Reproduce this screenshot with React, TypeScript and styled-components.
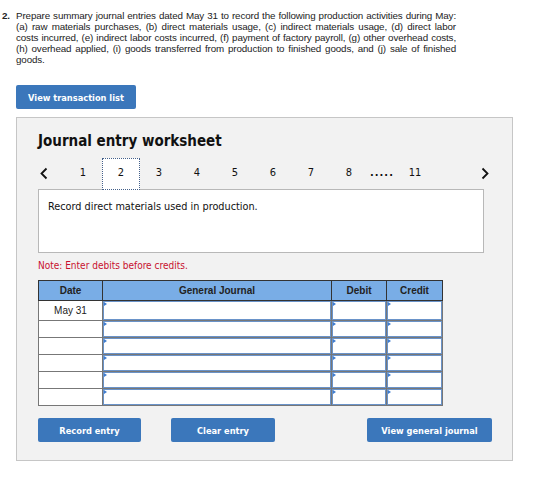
import React from "react";
import styled, { createGlobalStyle } from "styled-components";

const Global = createGlobalStyle`
  html, body { margin: 0; padding: 0; background: #ffffff; }
  body { font-family: "Liberation Sans", Arial, sans-serif; color: #222; }
`;

const UI = `"DejaVu Sans Condensed", "DejaVu Sans", Verdana, sans-serif`;

const Page = styled.div`
  width: 535px;
  padding: 10px 0 0 0;
  box-sizing: border-box;
`;

const Question = styled.div`
  display: flex;
  font-size: 9.8px;
  line-height: 11px;
  letter-spacing: -0.12px;
  color: #222;
`;

const QNum = styled.div`
  width: 16px;
  padding-left: 2px;
  box-sizing: border-box;
  font-weight: bold;
  flex: none;
`;

const QText = styled.p`
  margin: 0;
  width: 440px;
  text-align: justify;
`;

const BlueButton = styled.button<{ $w: number }>`
  width: ${(p) => p.$w}px;
  height: 24px;
  background: #3b77bb;
  color: #ffffff;
  border: none;
  border-radius: 2px;
  font-family: ${UI};
  font-weight: bold;
  font-size: 9.2px;
  padding: 0;
  cursor: pointer;
`;

const TopButtonRow = styled.div`
  padding: 20px 0 0 16px;
`;

const Panel = styled.section`
  margin: 8px 0 0 16px;
  width: 497px;
  height: 344px;
  box-sizing: border-box;
  background: #f2f2f2;
  border: 1px solid #c6c6c6;
  padding: 14px 20px 0 21px;
  font-family: ${UI};
`;

const Title = styled.h2`
  margin: 0;
  font-size: 15px;
  line-height: 18px;
  font-weight: bold;
  color: #111;
`;

const NavRow = styled.div`
  display: flex;
  align-items: center;
  width: 451px;
  height: 32px;
  margin-top: 8px;
  margin-bottom: -1px;
  position: relative;
  z-index: 1;
`;

const Arrow = styled.div<{ $right?: boolean }>`
  width: 26px;
  display: flex;
  justify-content: ${(p) => (p.$right ? "flex-end" : "flex-start")};
  margin-left: ${(p) => (p.$right ? "auto" : "0")};
  padding-left: ${(p) => (p.$right ? "0" : "2px")};
  box-sizing: border-box;
  margin-top: -2px;
`;

const Tab = styled.div<{ $active?: boolean }>`
  width: 38px;
  height: 32px;
  box-sizing: border-box;
  display: flex;
  align-items: center;
  justify-content: center;
  padding-bottom: 3px;
  font-size: 11px;
  color: #111;
  background: ${(p) => (p.$active ? "#ffffff" : "transparent")};
  border: ${(p) => (p.$active ? "1px dotted #44608a" : "1px solid transparent")};
`;

const Dots = styled.div`
  width: 28px;
  text-align: center;
  font-size: 11px;
  font-weight: bold;
  letter-spacing: 1px;
  color: #111;
  padding-bottom: 3px;
`;

const DescBox = styled.div`
  width: 446px;
  height: 64px;
  box-sizing: border-box;
  background: #ffffff;
  border: 1px solid #b8b8b8;
  padding: 10px 9px;
  font-size: 10.8px;
  line-height: 14px;
  color: #111;
`;

const Note = styled.div`
  margin-top: 6px;
  font-size: 10px;
  line-height: 14px;
  color: #c8102e;
`;

const Table = styled.table`
  margin-top: 7px;
  width: 404px;
  border-collapse: collapse;
  table-layout: fixed;
  font-family: "Liberation Sans", Arial, sans-serif;
  font-size: 10px;
`;

const Th = styled.th<{ $w: number }>`
  width: ${(p) => p.$w}px;
  height: 20px;
  padding: 0;
  background: #79ade6;
  border: 1px solid #333;
  font-weight: bold;
  color: #222;
  box-sizing: border-box;
`;

const Td = styled.td<{ $h: number }>`
  height: ${(p) => p.$h}px;
  padding: 0;
  border: 1px solid #777;
  background: #ffffff;
  text-align: center;
  color: #222;
  box-sizing: border-box;
`;

const Field = styled.div<{ $h: number }>`
  height: ${(p) => p.$h}px;
  box-sizing: border-box;
  border: 1px solid #6a93c9;
  position: relative;
  background: #fff;
  &::before {
    content: "";
    position: absolute;
    left: 0;
    top: 0;
    border-top: 2px solid transparent;
    border-bottom: 2px solid transparent;
    border-left: 3px solid #3e7cd0;
  }
`;

const ButtonRow = styled.div`
  display: flex;
  margin-top: 12px;
`;

const Chevron = ({ right }: { right?: boolean }) => (
  <svg width="8" height="13" viewBox="0 0 8 13">
    <polyline
      points={right ? "1.5,1.5 6.5,6.5 1.5,11.5" : "6.5,1.5 1.5,6.5 6.5,11.5"}
      fill="none"
      stroke="#111"
      strokeWidth="1.8"
    />
  </svg>
);

const rows = [
  { date: "May 31", h: 20 },
  { date: "", h: 17 },
  { date: "", h: 17 },
  { date: "", h: 17 },
  { date: "", h: 17 },
  { date: "", h: 17 },
];

export default function App() {
  return (
    <Page>
      <Global />
      <Question>
        <QNum>2.</QNum>
        <QText>
          Prepare summary journal entries dated May 31 to record the following production activities during May:
          (a) raw materials purchases, (b) direct materials usage, (c) indirect materials usage, (d) direct labor
          costs incurred, (e) indirect labor costs incurred, (f) payment of factory payroll, (g) other overhead costs,
          (h) overhead applied, (i) goods transferred from production to finished goods, and (j) sale of finished
          goods.
        </QText>
      </Question>
      <TopButtonRow>
        <BlueButton $w={120}>View transaction list</BlueButton>
      </TopButtonRow>
      <Panel>
        <Title>Journal entry worksheet</Title>
        <NavRow>
          <Arrow>
            <Chevron />
          </Arrow>
          {[1, 2, 3, 4, 5, 6, 7, 8].map((n) => (
            <Tab key={n} $active={n === 2}>
              {n}
            </Tab>
          ))}
          <Dots>.....</Dots>
          <Tab>11</Tab>
          <Arrow $right>
            <Chevron right />
          </Arrow>
        </NavRow>
        <DescBox>Record direct materials used in production.</DescBox>
        <Note>Note: Enter debits before credits.</Note>
        <Table>
          <thead>
            <tr>
              <Th $w={64}>Date</Th>
              <Th $w={229}>General Journal</Th>
              <Th $w={55}>Debit</Th>
              <Th $w={56}>Credit</Th>
            </tr>
          </thead>
          <tbody>
            {rows.map((r, i) => (
              <tr key={i}>
                <Td $h={r.h}>{r.date}</Td>
                <Td $h={r.h}>
                  <Field $h={r.h - 1} />
                </Td>
                <Td $h={r.h}>
                  <Field $h={r.h - 1} />
                </Td>
                <Td $h={r.h}>
                  <Field $h={r.h - 1} />
                </Td>
              </tr>
            ))}
          </tbody>
        </Table>
        <ButtonRow>
          <BlueButton $w={103}>Record entry</BlueButton>
          <BlueButton $w={104} style={{ marginLeft: 30 }}>
            Clear entry
          </BlueButton>
          <BlueButton $w={125} style={{ marginLeft: "auto" }}>
            View general journal
          </BlueButton>
        </ButtonRow>
      </Panel>
    </Page>
  );
}
